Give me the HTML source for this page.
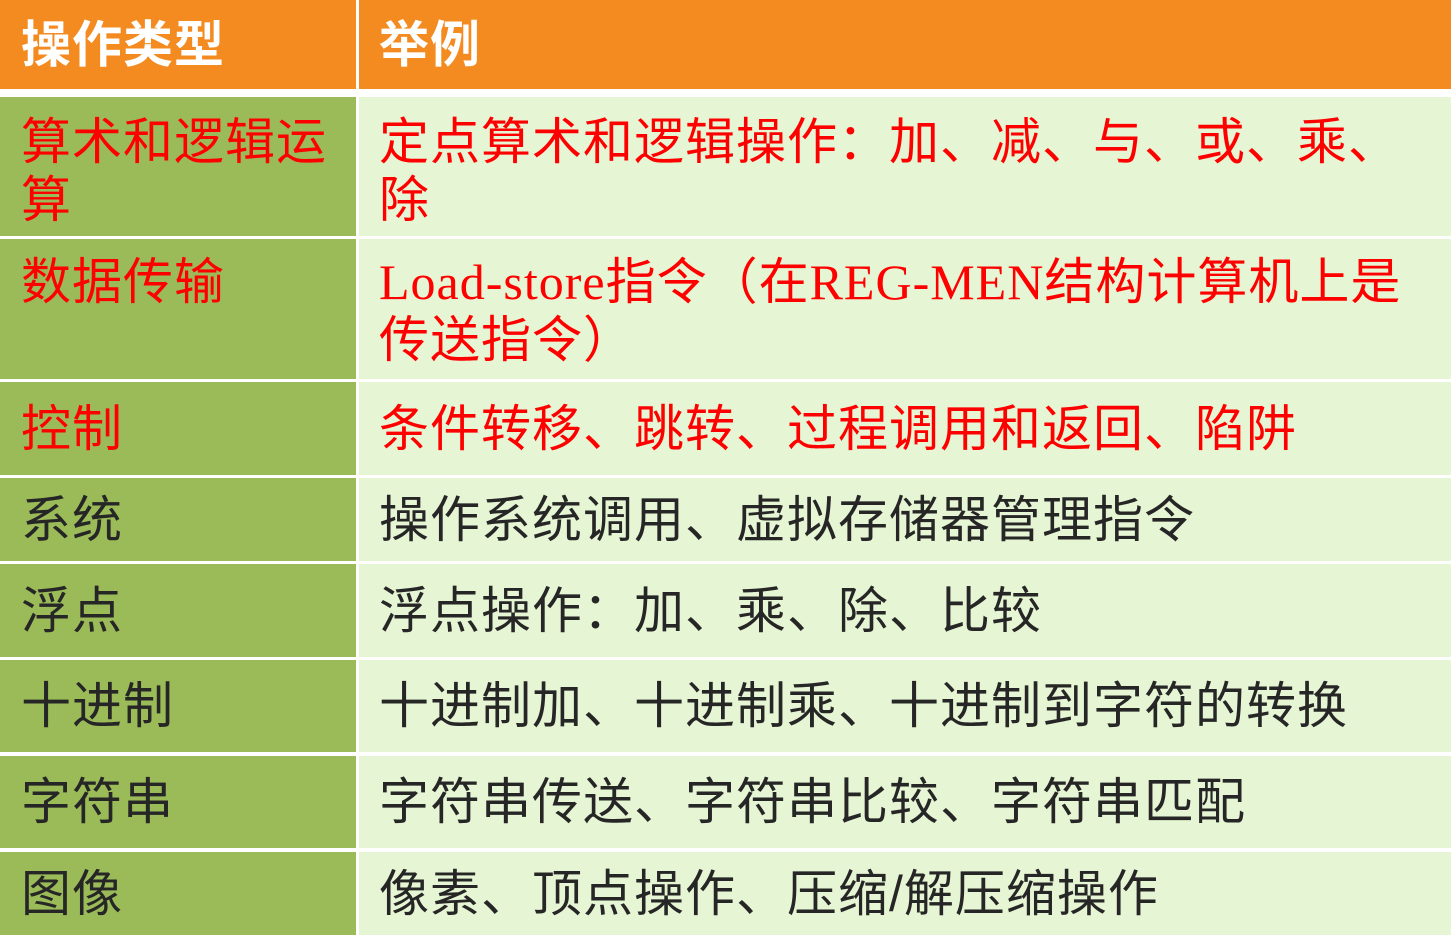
<!DOCTYPE html>
<html><head><meta charset="utf-8"><style>
html,body{margin:0;padding:0;width:1451px;height:940px;background:#fff;overflow:hidden;}
.c{position:absolute;display:flex;align-items:center;box-sizing:border-box;font-family:"Liberation Sans","Noto Sans CJK SC",sans-serif;font-size:50px;letter-spacing:1px;line-height:58px;padding-top:0px;}
.l{left:0;width:356px;background:#9BBB59;padding-left:21px;}
.r{left:359px;width:1092px;background:#E6F5D3;padding-left:20px;padding-right:20px;}
.h{background:#F38B20;color:#fff;font-weight:bold;padding-top:0;}
.red{color:#FF0000;}
.blk{color:#262626;}
.s{font-family:"Liberation Serif","Noto Sans CJK SC",serif;line-height:58px;}
</style></head><body>
<div class="c h" style="left:0;width:356px;top:0;height:89px;padding-left:21px;">操作类型</div>
<div class="c h" style="left:359px;width:1092px;top:0;height:89px;padding-left:20px;">举例</div>

<div class="c l red" style="top:97px;height:139px;padding-top:8px;">算术和逻辑运<br>算</div>
<div class="c r red" style="top:97px;height:139px;padding-top:8px;"><div>定点算术和逻辑操作：加、减、与、或、乘、<br>除</div></div>

<div class="c l red" style="top:239px;height:140px;align-items:flex-start;padding-top:14px;">数据传输</div>
<div class="c r red" style="top:239px;height:140px;padding-top:4px;"><div style="line-height:58px;"><span class="s">Load-store</span>指令（在<span class="s">REG-MEN</span>结构计算机上是<br>传送指令）</div></div>

<div class="c l red" style="top:382px;height:93px;">控制</div>
<div class="c r red" style="top:382px;height:93px;">条件转移、跳转、过程调用和返回、陷阱</div>

<div class="c l blk" style="top:478px;height:83px;">系统</div>
<div class="c r blk" style="top:478px;height:83px;">操作系统调用、虚拟存储器管理指令</div>

<div class="c l blk" style="top:564px;height:93px;">浮点</div>
<div class="c r blk" style="top:564px;height:93px;">浮点操作：加、乘、除、比较</div>

<div class="c l blk" style="top:660px;height:92px;">十进制</div>
<div class="c r blk" style="top:660px;height:92px;">十进制加、十进制乘、十进制到字符的转换</div>

<div class="c l blk" style="top:756px;height:92px;">字符串</div>
<div class="c r blk" style="top:756px;height:92px;">字符串传送、字符串比较、字符串匹配</div>

<div class="c l blk" style="top:852px;height:83px;">图像</div>
<div class="c r blk" style="top:852px;height:83px;">像素、顶点操作、压缩/解压缩操作</div>
</body></html>
